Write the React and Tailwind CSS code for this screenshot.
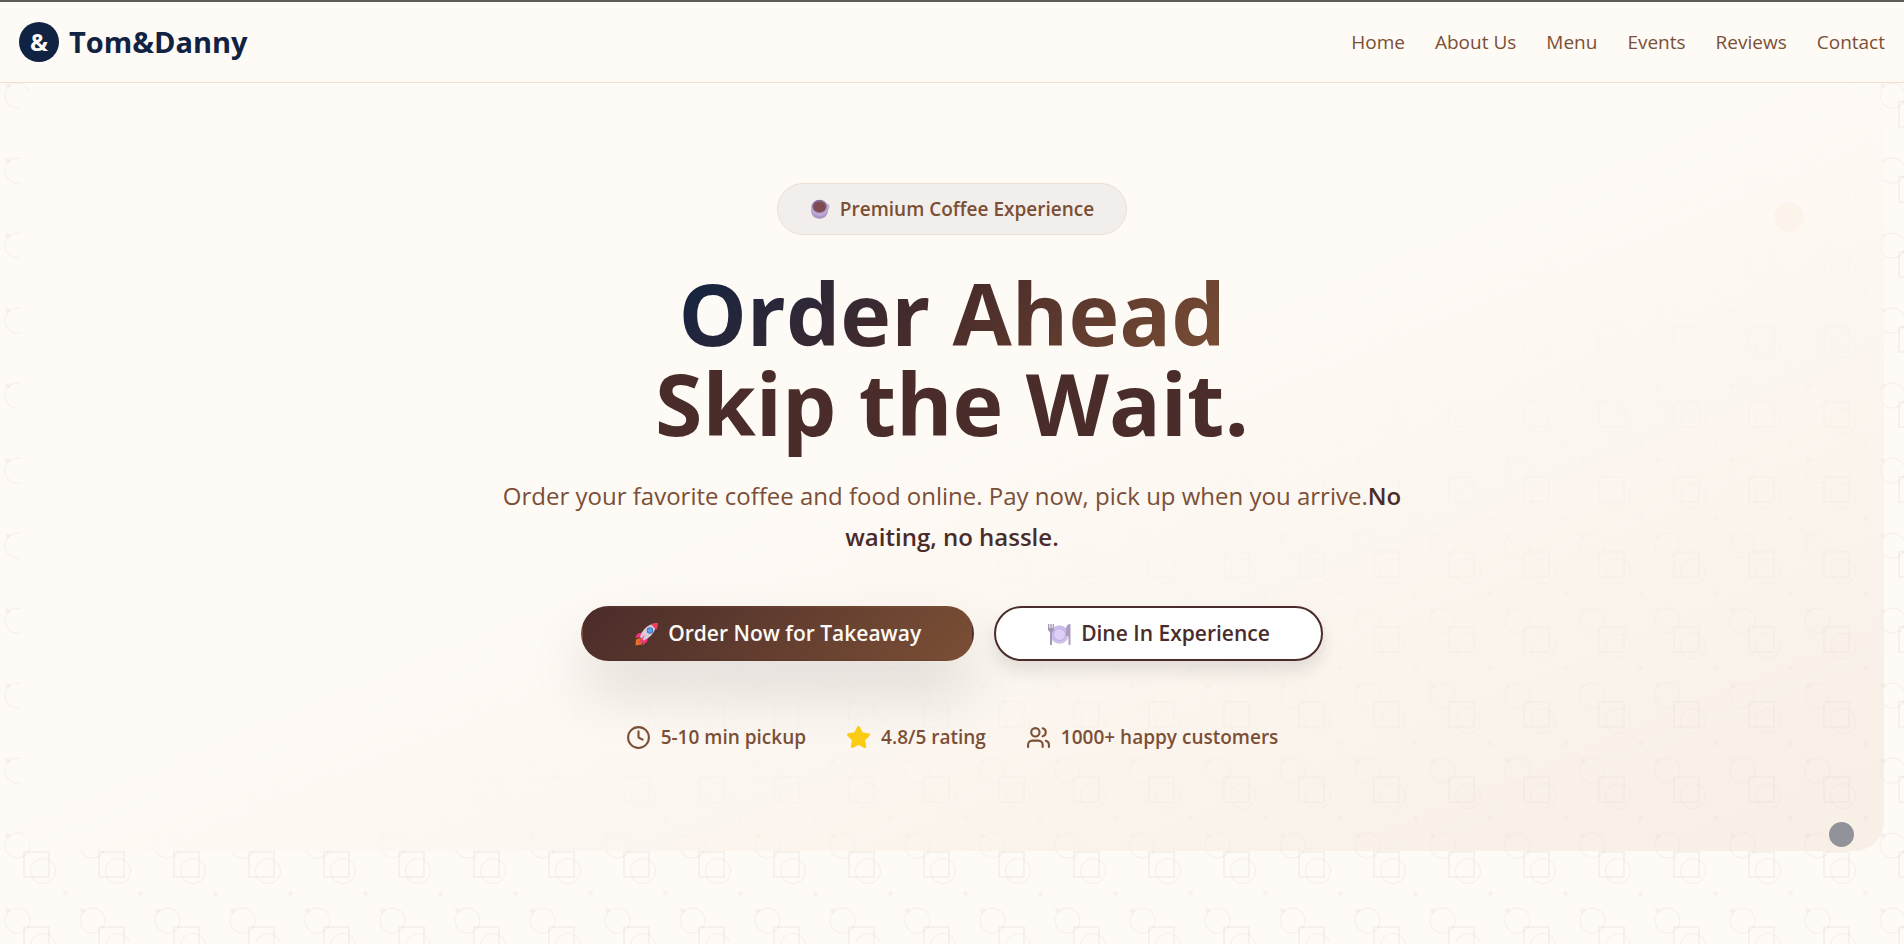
import React from "react";
import { Clock, Star, Users } from "lucide-react";

const navItems = ["Home", "About Us", "Menu", "Events", "Reviews", "Contact"];

function CupIcon() {
  return (
    <svg className="size-5" viewBox="0 0 20 20" aria-hidden="true">
      <path d="M15.5 5.6c2.3-.7 3.8.5 3.2 2.8-.3 1.5-1.4 2.7-2.9 3.2" fill="none" stroke="#b9a8d3" strokeWidth="1.3" />
      <path d="M1 10.500C1 16 4 19.800 9.500 19.800S18 16 18 10.500z" fill="#ab96c6" />
      <ellipse cx="9.5" cy="9" rx="8.500" ry="8" fill="#bca9d2" />
      <ellipse cx="9.500" cy="7.300" rx="7.300" ry="6.500" fill="#84709a" />
      <ellipse cx="9.500" cy="7.800" rx="6.200" ry="5.400" fill="#804b50" />
    </svg>
  );
}

function RocketIcon() {
  return (
    <svg className="size-6" viewBox="0 0 24 24" aria-hidden="true">
      <path d="M2 17.5 6 16l3 3-1.5 3.5-6 1z" fill="#e8731f" />
      <path d="M9 10 3.5 11.8 1 16l6-1z" fill="#f8317f" />
      <path d="m14 15-.8 4.5-4.7 4L9 17z" fill="#f8317f" />
      <path d="M6 15C8 8 14 1.5 22 1.5c.5 8-6 14.500-13 17z" fill="#dccbdc" />
      <path d="M17 2.400c2-1.200 4.300-1.500 7-1.400 0 2.500-.4 4.800-1.600 6.800z" fill="#f23a5c" />
      <circle cx="16" cy="8.500" r="3.200" fill="#4a6fb5" />
      <circle cx="16" cy="8.500" r="2.200" fill="#53a8f5" />
      <path d="M11 12.500 4 20.500l3 .5z" fill="#f8317f" />
    </svg>
  );
}

function PlateIcon() {
  return (
    <svg className="size-6" viewBox="0 0 24 24" aria-hidden="true">
      <circle cx="12.5" cy="12.500" r="9.300" fill="#cdbeec" />
      <circle cx="12.5" cy="12.500" r="6" fill="#dccff5" stroke="#bfaee0" strokeWidth="1" />
      <path d="M1 2h1.300v4h1V2h1.400v4h1V2H7v6L5 10.500V23H3V10.500L1 8z" fill="#a597b4" />
      <path d="M23.500 2V23h-2v-9h-2.500V7c0-3 1.500-5 4.500-5z" fill="#ad9cc0" />
    </svg>
  );
}

function Backdrop() {
  return (
    <svg className="absolute inset-0 -z-10 h-full w-full" aria-hidden="true">
      <defs>
        <pattern id="tile" width="75" height="75" y="1" patternUnits="userSpaceOnUse">
          <g fill="none" stroke="#4a2c2a" strokeOpacity="0.045">
            <circle cx="17.5" cy="17.5" r="12.5" strokeWidth="1.25" />
            <circle cx="43" cy="43" r="12.5" strokeWidth="1.25" />
            <rect x="24" y="24" width="25" height="25" strokeWidth="2" />
          </g>
          <g fill="#4a2c2a" fillOpacity="0.04">
            <circle cx="7.5" cy="7.5" r="2.5" />
            <circle cx="65.5" cy="65.5" r="2.5" />
          </g>
        </pattern>
      </defs>
      <rect width="100%" height="100%" fill="url(#tile)" />
    </svg>
  );
}

export default function App() {
  return (
    <div className="relative isolate flex min-h-screen flex-col border-t-2 border-[#5f5c5a] bg-[#fefaf5] font-['Open_Sans','Noto_Sans',sans-serif] text-[#7b4f35]">
      <Backdrop />
      <header className="flex h-[81px] items-center justify-between border-b border-[#f3dfca] bg-[#fefaf5] px-[19px]">
        <a href="#home" className="flex items-center gap-2.5 text-[#112343]">
          <span className="flex size-10 items-center justify-center rounded-full bg-[#112343] text-2xl font-bold text-[#fefaf5]">&amp;</span>
          <span className="text-[29px] font-bold">Tom&amp;Danny</span>
        </a>
        <nav className="flex gap-[30px] pt-px text-[19px]">
          {navItems.map((item) => (
            <a key={item} href={"#" + item.toLowerCase().replace(" ", "-")}>{item}</a>
          ))}
        </nav>
      </header>

      <main className="relative mx-5 flex flex-col items-center rounded-[30px] bg-[linear-gradient(to_bottom_right,#fefaf5_0%,#fefaf5_48%,rgba(230,206,185,0.26)_100%)] px-6 pt-[100px] pb-[99px] text-center">
        <div className="flex h-[52px] items-center gap-2.5 rounded-full border border-[#eddfd2] bg-[#f2eeeb] px-8 text-[19px] font-semibold">
          <CupIcon />
          Premium Coffee Experience
        </div>

        <h1 className="mt-[33px] text-[86px] leading-[90px] font-bold text-[#4a2c2a]">
          <span className="mx-auto block w-fit bg-[linear-gradient(135deg,#112343,#4a2c2a_50%,#7b4f35)] bg-clip-text text-transparent">Order Ahead</span>
          Skip the Wait.
        </h1>

        <p className="mt-[27px] max-w-[910px] text-2xl leading-[41px]">
          Order your favorite coffee and food online. Pay now, pick up when you arrive.
          <strong className="font-semibold text-[#4a2c2a]">No waiting, no hassle.</strong>
        </p>

        <div className="mt-[49px] flex gap-5 text-[21px] font-semibold">
          <button type="button" className="flex h-[55px] items-center gap-2.5 rounded-full border-2 border-transparent bg-[linear-gradient(135deg,#4a2c2a,#7b4f35)] px-[51px] text-[#fefaf5] shadow-[0_30px_60px_rgba(0,0,0,0.12)]">
            <RocketIcon />
            Order Now for Takeaway
          </button>
          <button type="button" className="flex h-[55px] items-center gap-2.5 rounded-full border-2 border-[#4a2c2a] bg-white px-[51px] text-[#4a2c2a] shadow-[0_10px_18px_rgba(0,0,0,0.1)]">
            <PlateIcon />
            Dine In Experience
          </button>
        </div>

        <ul className="mt-[62px] flex gap-10 text-[19px] font-semibold">
          <li className="flex items-center gap-2.5"><Clock className="size-[25px]" />5-10 min pickup</li>
          <li className="flex items-center gap-2.5"><Star className="size-[25px] fill-[#facc15] text-[#facc15]" />4.8/5 rating</li>
          <li className="flex items-center gap-2.5"><Users className="size-[25px]" />1000+ happy customers</li>
        </ul>

        <span className="absolute top-[119px] right-20 size-[30px] rounded-full bg-[#fcf3eb]" />
        <span className="absolute right-[30px] bottom-1 size-[25px] rounded-full bg-[#92939a]" />
      </main>
    </div>
  );
}
